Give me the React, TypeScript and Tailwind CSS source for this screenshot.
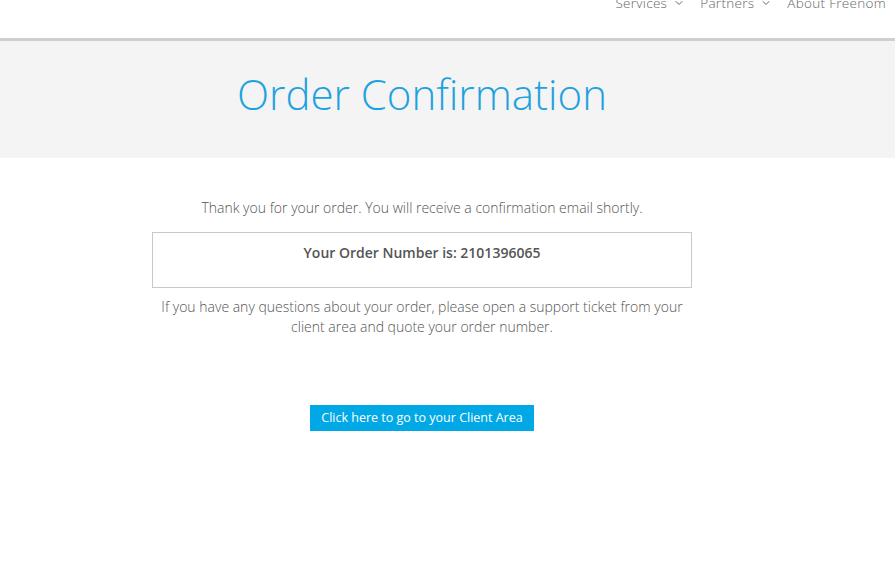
import { ChevronDown } from "lucide-react";

export default function App() {
  return (
    <div className="min-h-screen bg-white font-['Open_Sans',sans-serif] font-light text-[#555]">
      {/* Header */}
      <header className="flex h-[38px] items-start justify-end border-b-[3px] border-[#cfcfcf] box-content">
        <nav className="flex -translate-y-[7px] gap-[15px] pr-[9px] text-[13.5px] text-[#666] tracking-[0.3px]">
          <span className="flex items-center gap-[6px]">
            Services <ChevronDown size={12} strokeWidth={2} />
          </span>
          <span className="flex items-center gap-[6px]">
            Partners <ChevronDown size={12} strokeWidth={2} />
          </span>
          <span>About Freenom</span>
        </nav>
      </header>

      {/* Title band */}
      <div className="h-[117px] bg-[#f4f4f4]">
        <div className="ml-[152px] w-[540px] pt-[25px] text-center">
          <h1 className="text-[42px] leading-[56px] text-[#1ea2df] font-light">Order Confirmation</h1>
        </div>
      </div>

      {/* Content */}
      <main className="ml-[152px] w-[540px] pt-[40px] text-center text-[14px] leading-[20px]">
        <p>Thank you for your order. You will receive a confirmation email shortly.</p>
        <div className="mt-[14px] h-[56px] border border-[#c8c8c8] pt-[10px]">
          <p className="font-semibold text-[#555]">Your Order Number is: 2101396065</p>
        </div>
        <p className="mt-[9px] px-[6px]">
          If you have any questions about your order, please open a support ticket from your client area and quote your
          order number.
        </p>
        <div className="mt-[68px]">
          <button className="h-[26px] bg-[#00a9e6] px-[11px] text-[12.5px] font-normal text-white">
            Click here to go to your Client Area
          </button>
        </div>
      </main>
    </div>
  );
}
